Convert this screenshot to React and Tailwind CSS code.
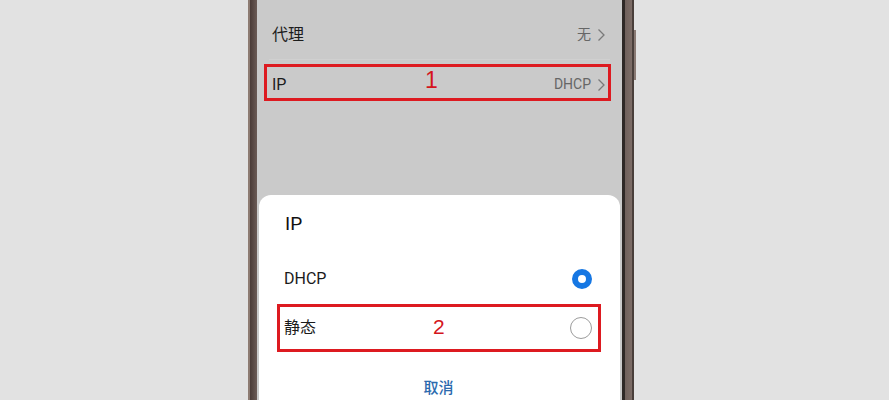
import React from "react";

const font = { fontFamily: '"Roboto", "Noto Sans CJK SC", sans-serif' };

function Chevron() {
  return (
    <svg width="9" height="14" viewBox="0 0 9 14" className="ml-[6px]">
      <polyline points="1.5,1.5 7,7 1.5,12.5" fill="none" stroke="#7a7a7a" strokeWidth="1.3" />
    </svg>
  );
}

function SettingRow({ label, value }) {
  return (
    <div className="flex h-[49px] shrink-0 items-center justify-between pl-[15px] pr-[16px]">
      <span className="text-[16px] text-[#1c1c1c]">{label}</span>
      <span className="flex items-center text-[14px] text-[#666]">
        {value}
        <Chevron />
      </span>
    </div>
  );
}

function Radio({ checked }) {
  return checked ? (
    <span className="block h-[20px] w-[20px] rounded-full border-[6px] border-[#1677e3] bg-white" />
  ) : (
    <span className="block h-[22px] w-[22px] rounded-full border border-[#9c9c9c] bg-white" />
  );
}

function OptionRow({ label, checked }) {
  return (
    <div className="flex h-[49px] shrink-0 items-center justify-between">
      <span className="text-[16px] text-[#1a1a1a]">{label}</span>
      <Radio checked={checked} />
    </div>
  );
}

function Marker({ n, className, textClass }) {
  return (
    <div className={`pointer-events-none absolute border-[3px] border-[#dd1a20] ${className}`}>
      <span
        className={`absolute leading-none text-[#d4151c] ${textClass}`}
        style={{ fontFamily: '"Liberation Sans", sans-serif' }}
      >
        {n}
      </span>
    </div>
  );
}

export default function App() {
  return (
    <div className="flex h-[400px] w-[889px] overflow-hidden bg-[#e2e2e2] pl-[248px]" style={font}>
      {/* left edge of the handset */}
      <div className="flex h-full shrink-0">
        <div className="w-[2px] bg-[#8d7b72]" />
        <div className="w-[7px] bg-gradient-to-r from-[#4a3b37] to-[#6b5b56]" />
      </div>

      {/* screen */}
      <div className="relative flex h-full w-[365px] shrink-0 flex-col overflow-hidden bg-[#cacaca]">
        <div className="h-[10px] shrink-0" />
        <SettingRow label="代理" value="无" />
        <div className="mx-[12px] h-px shrink-0 bg-[#d0d0d0]" />
        <SettingRow label="IP" value="DHCP" />

        <Marker n="1" className="left-[7px] top-[64px] h-[37px] w-[347px]" textClass="left-[158px] top-[2px] text-[23px]" />

        {/* dialog */}
        <div className="relative mx-[2px] mt-[86px] h-[230px] shrink-0 rounded-t-[12px] bg-white pl-[26px] pr-[28px]">
          <div className="flex h-[59px] items-center text-[19px] text-[#111]">IP</div>
          <div className="-ml-px">
            <OptionRow label="DHCP" checked />
            <OptionRow label="静态" />
          </div>
          <div className="flex h-[72px] items-center justify-center text-[15px] font-medium text-[#2b6aae]">
            取消
          </div>

          <Marker n="2" className="left-[18px] top-[109px] h-[48px] w-[324px]" textClass="left-[153px] top-[9px] text-[21px]" />
        </div>
      </div>

      {/* right edge of the handset */}
      <div className="flex h-full shrink-0">
        <div className="w-[3px] bg-[#2e2826]" />
        <div className="w-[7px] bg-gradient-to-r from-[#6f605b] to-[#7d6d67]" />
        <div className="w-[2px] bg-[#4a3f3b]" />
        <div className="flex w-[2px] flex-col">
          <div className="mt-[30px] h-[50px] bg-[#8a7a74]" />
        </div>
      </div>
    </div>
  );
}
